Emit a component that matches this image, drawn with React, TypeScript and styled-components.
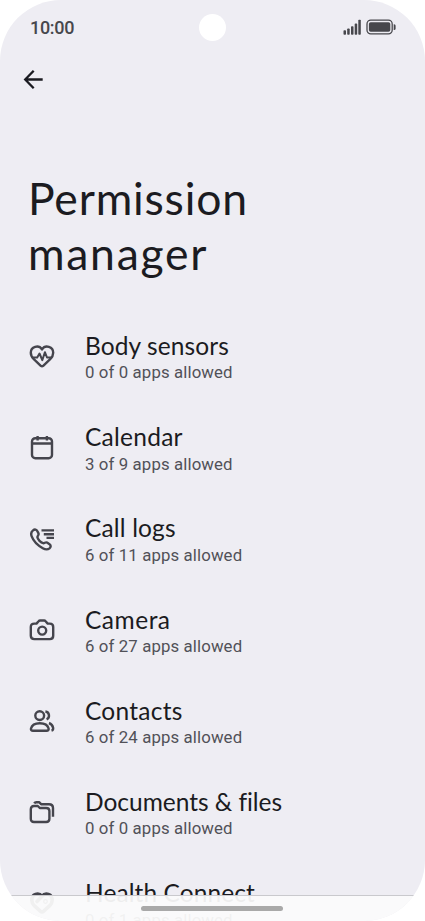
import React from "react";
import styled, { createGlobalStyle } from "styled-components";

const GlobalStyle = createGlobalStyle`
  * { box-sizing: border-box; }
  html, body { margin: 0; padding: 0; background: #fff; overflow: hidden; }
`;

const Screen = styled.main`
  position: relative;
  width: 425px;
  height: 921px;
  overflow: hidden;
  border-radius: 61px;
  background: #eeedf3;
  color: #1b1b21;
  font-family: Lato, "Noto Sans", sans-serif;
  font-variant-ligatures: none;
`;

const StatusBar = styled.header`
  display: grid;
  grid-template-columns: 1fr 27px 1fr;
  align-items: center;
  height: 54px;
  padding: 0 29px 0 30px;
`;

const Clock = styled.time`
  font: 500 18px/24px Roboto, sans-serif;
  letter-spacing: -0.3px;
  padding-top: 1px;
  color: #47474c;
`;

const CameraHole = styled.span`
  width: 27px;
  height: 27px;
  margin-left: -1px;
  border-radius: 50%;
  background: #fff;
`;

const StatusIcons = styled.div`
  display: flex;
  justify-content: flex-end;
  align-items: center;
`;

const Toolbar = styled.nav`
  display: flex;
  align-items: center;
  height: 50px;
  padding-left: 21px;
`;

const BackButton = styled.button`
  display: flex;
  padding: 0;
  border: 0;
  background: none;
  color: #1b1b21;
`;

const Title = styled.h1`
  margin: 66px 0 0 28px;
  font-size: 44.5px;
  line-height: 55px;
  font-weight: 400;
`;

const TitleLine = styled.span<{ $spacing: number }>`
  display: block;
  letter-spacing: ${(p) => p.$spacing}px;
`;

const List = styled.ul`
  margin: 31px 0 0;
  padding: 0;
  list-style: none;
`;

const Row = styled.li`
  display: grid;
  grid-template-columns: 26px 1fr;
  column-gap: 30px;
  align-items: start;
  height: 91.2px;
  padding: 20px 0 0 29px;
`;

const RowIcon = styled.svg`
  width: 26px;
  height: 26px;
  margin-top: 12.3px;
  fill: none;
  stroke: #45454d;
  stroke-width: 2.4;
  stroke-linecap: round;
  stroke-linejoin: round;
`;

const RowTitle = styled.div<{ $spacing: number }>`
  font-size: 24.5px;
  line-height: 30px;
  margin-bottom: 0.4px;
  letter-spacing: ${(p) => p.$spacing}px;
  white-space: nowrap;
`;

const RowSummary = styled.div`
  font: 400 16.8px/22px Roboto, sans-serif;
  color: #515158;
  letter-spacing: 0.12px;
  white-space: nowrap;
`;

const NavigationBar = styled.footer`
  position: absolute;
  inset: auto 0 0;
  display: flex;
  justify-content: center;
  height: 26px;
  padding: 10px 1px 0 0;
  border-top: 1px solid #c9c9cd;
  background: rgba(251, 251, 251, 0.94);
`;

const HomeHandle = styled.span`
  width: 142px;
  height: 5px;
  border-radius: 3px;
  background: #a9a9a9;
`;

interface Permission {
  name: string;
  summary: string;
  spacing: number;
  icon: React.ReactNode;
}

const permissions: Permission[] = [
  {
    name: "Body sensors",
    summary: "0 of 0 apps allowed",
    spacing: 0.1,
    icon: (
      <>
        <path d="M11.800 22.800 4.800 16.200C2.200 13.700 1.800 12 1.800 9.800A6.100 6.100 0 0 1 13 6.400 6.100 6.100 0 0 1 24.200 9.800c0 2.200-.4 3.900-3 6.400L14.200 22.800Q13 23.800 11.800 22.800Z" />
        <path d="M3.500 14.500h4.700l2.300-4 2.800 6.700 2.600-8 2.100 5.300h4.500" strokeWidth="2" />
      </>
    ),
  },
  {
    name: "Calendar",
    summary: "3 of 9 apps allowed",
    spacing: 0.25,
    icon: (
      <>
        <rect x="3" y="4.200" width="20" height="20" rx="3.300" />
        <path d="M3 9.500h20M8.600 2v4.600M17.900 2v4.600" strokeLinecap="butt" />
      </>
    ),
  },
  {
    name: "Call logs",
    summary: "6 of 11 apps allowed",
    spacing: 0.15,
    icon: (
      <>
        <path d="M4 4.400c1.800-1.500 3.500-.9 4.400.9l1.100 2.100c.7 1.500-1.200 2.500-1.100 3.800.2 2.200 3.500 5.500 5.700 6 1.400.3 2.500-1.500 3.900-.6l2.200 1.400c1.800 1.200 2 2.800.3 4.300-1.800 1.500-4.100 1.400-6.700-.1C8.700 19.400 4.400 14.900 2.700 10.400 1.600 7.600 2.300 5.700 4 4.400Z" />
        <path d="M12.500 4.400h12.500M14.800 8.200H25M17.500 11.900H25" strokeLinecap="butt" />
      </>
    ),
  },
  {
    name: "Camera",
    summary: "6 of 27 apps allowed",
    spacing: 0.5,
    icon: (
      <>
        <path d="M5.300 6.600h2.200L9.600 4.200c.4-.5.9-.7 1.500-.7h4c.6 0 1.100.2 1.500.7l2.100 2.400h2.200c2.200 0 3.300 1.200 3.300 3.300v8.900c0 2.200-1.100 3.300-3.300 3.300H5.300c-2.200 0-3.500-1.100-3.500-3.300V9.900c0-2.100 1.300-3.300 3.500-3.300Z" />
        <circle cx="13.200" cy="13.600" r="4" />
      </>
    ),
  },
  {
    name: "Contacts",
    summary: "6 of 24 apps allowed",
    spacing: 0.25,
    icon: (
      <>
        <circle cx="10.700" cy="7.600" r="4.400" />
        <path d="M4 22.700c-1.500 0-2.300-.9-2-2.200.9-3.600 4-5.300 8.800-5.300s7.900 1.700 8.800 5.300c.3 1.300-.5 2.200-2 2.200Z" />
        <path d="M16.400 3.500a4.100 4.100 0 0 1 1.200 7.800M20 15c2.200.8 3.600 2.200 4.100 4.700.3 1.700-.3 2.600-1.600 3" strokeLinecap="butt" />
      </>
    ),
  },
  {
    name: "Documents & files",
    summary: "0 of 0 apps allowed",
    spacing: -0.02,
    icon: (
      <>
        <path d="M5 7h3.800l2 2h6.400c2.200 0 3.200 1 3.200 3.100v7.700c0 2.100-1 3.200-3.200 3.200H5c-2.200 0-3.200-1.100-3.200-3.200v-9.600C1.800 8 2.800 7 5 7Z" />
        <path d="M5.200 4.300c.5-.8 1.200-1.100 2.200-1.100h2.700l2 2H20c2.600 0 4 1.200 4 3.800v8.800" strokeLinecap="butt" />
      </>
    ),
  },
  {
    name: "Health Connect",
    summary: "0 of 1 apps allowed",
    spacing: 0.08,
    icon: (
      <g strokeWidth="3.600">
        <path d="M13 6.300C9.600 2.300 2.800 3.900 2.800 10.200c0 2.500.8 3.900 2.700 5.700l5.800 5.200c1.200 1 2.200 1 3.400 0l5.800-5.200c1.900-1.800 2.700-3.200 2.700-5.700 0-6.300-6.800-7.900-10.200-3.900l-5 5.200" />
        <circle cx="16.500" cy="11.500" r="0.600" />
      </g>
    ),
  },
];

export default function App() {
  return (
    <>
      <GlobalStyle />
      <Screen>
        <StatusBar>
          <Clock>10:00</Clock>
          <CameraHole />
          <StatusIcons>
            <svg width="54" height="18" viewBox="0 0 54 18" fill="#47474c">
              <rect x="1.500" y="12.200" width="2.500" height="4.500" rx="0.800" />
              <rect x="5.200" y="10.400" width="2.500" height="6.300" rx="0.800" />
              <rect x="9" y="8.300" width="2.500" height="8.400" rx="0.800" />
              <rect x="12.700" y="5.600" width="2.500" height="11.100" rx="0.800" />
              <rect x="16.300" y="1.700" width="2.500" height="15" rx="0.800" />
              <rect x="25" y="2.200" width="25.200" height="13.600" rx="3.800" fill="none" stroke="#47474c" strokeWidth="1.300" />
              <rect x="26.900" y="4.300" width="21.400" height="9.500" rx="1.800" />
              <path d="M51.700 6.200h.4q1.500 0 1.500 1.500v2.800q0 1.500-1.500 1.500h-.4Z" />
            </svg>
          </StatusIcons>
        </StatusBar>
        <Toolbar>
          <BackButton aria-label="Back">
            <svg width="24" height="24" viewBox="0 0 24 24" fill="none" stroke="currentColor" strokeWidth="2.300">
              <path d="M12.700 3.700 4.200 12.500l8.500 8.800M4.200 12.500h17.500" />
            </svg>
          </BackButton>
        </Toolbar>
        <Title>
          <TitleLine $spacing={0.8}>Permission</TitleLine>
          <TitleLine $spacing={1.7}>manager</TitleLine>
        </Title>
        <List>
          {permissions.map((item) => (
            <Row key={item.name}>
              <RowIcon viewBox="0 0 26 26">{item.icon}</RowIcon>
              <div>
                <RowTitle $spacing={item.spacing}>{item.name}</RowTitle>
                <RowSummary>{item.summary}</RowSummary>
              </div>
            </Row>
          ))}
        </List>
        <NavigationBar>
          <HomeHandle />
        </NavigationBar>
      </Screen>
    </>
  );
}
